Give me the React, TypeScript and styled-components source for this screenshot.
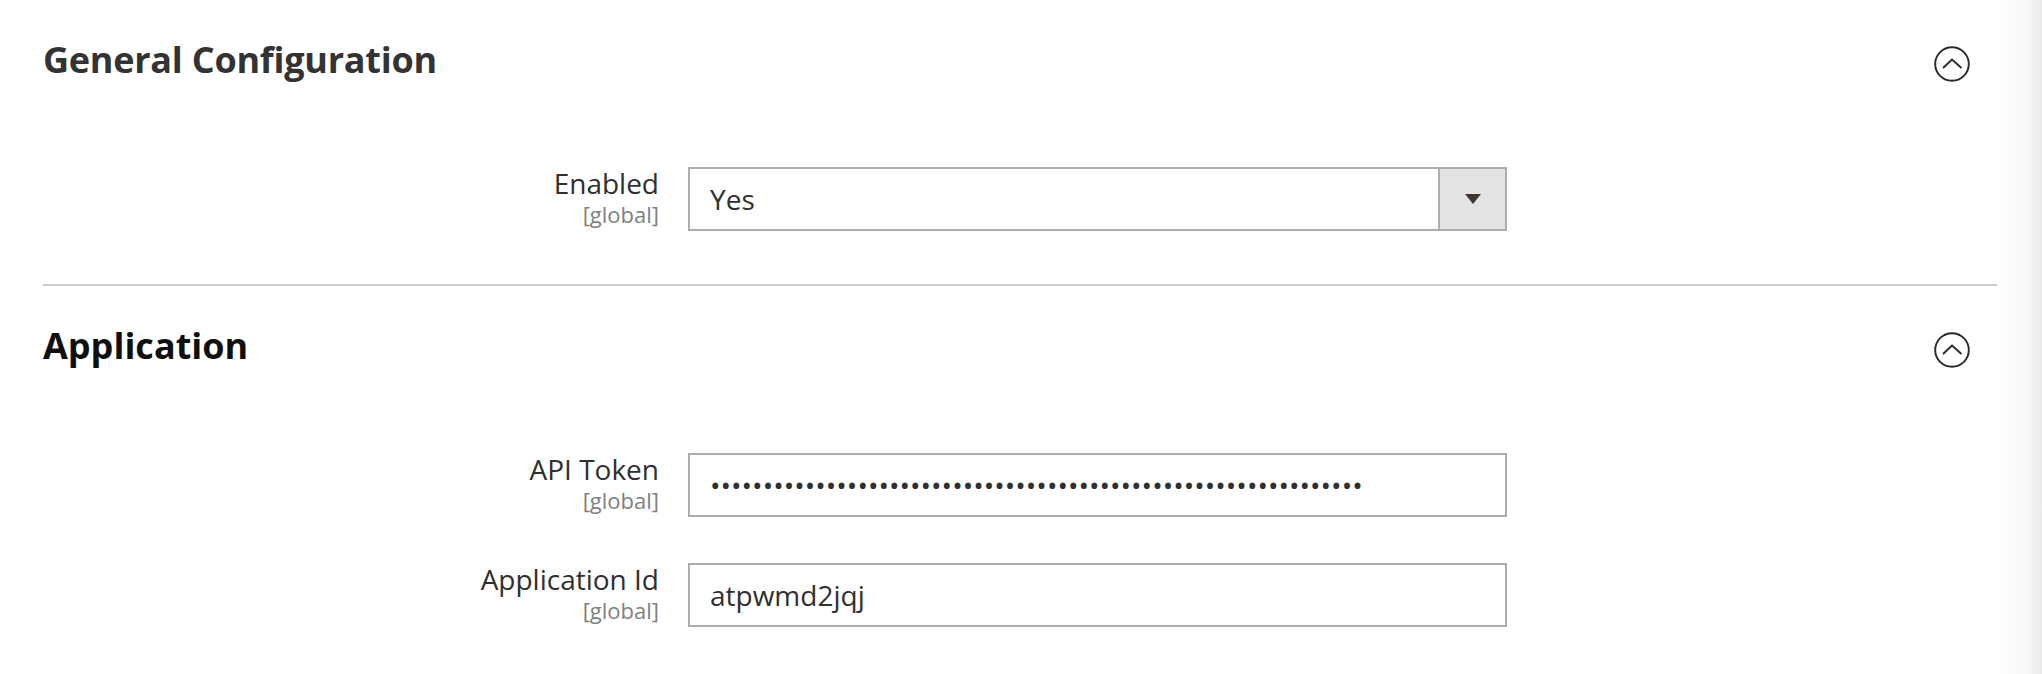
import React from 'react'
import styled, { createGlobalStyle } from 'styled-components'

const GlobalStyle = createGlobalStyle`
  html, body { margin: 0; padding: 0; background: #fff; }
  body { font-family: "Open Sans", "Liberation Sans", sans-serif; color: #303030; }
  * { box-sizing: border-box; }
`

const Page = styled.div`
  display: flex;
  min-height: 674px;
`

const Main = styled.div`
  flex: 1;
  padding-left: 43px;
`

const Shade = styled.div`
  width: 45px;
  background: linear-gradient(to right, #ffffff 0%, #f6f6f6 76%, #efefef 78%, #ebebeb 100%);
`

const Section = styled.section<{ $divider?: boolean }>`
  padding-top: 39px;
  padding-bottom: ${p => (p.$divider ? '53px' : '0')};
  border-bottom: ${p => (p.$divider ? '2px solid #cccccc' : 'none')};
`

const Header = styled.div`
  display: flex;
  justify-content: space-between;
  align-items: flex-start;
  padding-right: 27px;
  margin-bottom: 85px;
`

const Title = styled.h2<{ $strong?: boolean }>`
  margin: 0;
  font-size: 36px;
  line-height: 41px;
  font-weight: 700;
  letter-spacing: ${p => (p.$strong ? '0' : '-0.25px')};
  color: ${p => (p.$strong ? '#0f0f0f' : '#333333')};
`

const Toggle = styled.button`
  margin-top: 7px;
  width: 36px;
  height: 36px;
  padding: 0;
  border: 0;
  background: none;
  display: flex;
`

const Fields = styled.div`
  display: flex;
  flex-direction: column;
  gap: 46px;
`

const Row = styled.div`
  display: grid;
  grid-template-columns: 616px 819px;
  column-gap: 29px;
`

const Label = styled.label`
  text-align: right;
  font-size: 28px;
  line-height: 1.2;
  color: #303030;
`

const Scope = styled.span`
  display: block;
  font-size: 22px;
  line-height: 1.2;
  color: #808080;
`

const TextInput = styled.input`
  height: 64px;
  width: 100%;
  border: 2px solid #adadad;
  border-radius: 0;
  padding: 0 20px;
  font-family: "Open Sans", "Liberation Sans", sans-serif;
  font-size: 28px;
  color: #303030;
  background: #fff;
  outline: none;
`

const SelectBox = styled.div`
  height: 64px;
  display: flex;
  border: 2px solid #adadad;
  background: #fff;
`

const SelectValue = styled.div`
  flex: 1;
  display: flex;
  align-items: center;
  padding: 0 20px;
  font-size: 28px;
  color: #303030;
`

const ArrowBox = styled.div`
  width: 67px;
  border-left: 2px solid #adadad;
  background: #e3e3e3;
  display: flex;
  align-items: center;
  justify-content: center;
`

const Triangle = styled.span`
  width: 0;
  height: 0;
  border-left: 8px solid transparent;
  border-right: 8px solid transparent;
  border-top: 10px solid #41362f;
`

const ChevronCircle = () => (
  <svg width="36" height="36" viewBox="0 0 36 36">
    <circle cx="18" cy="18" r="16.8" fill="none" stroke="#2a2a2a" strokeWidth="1.9" />
    <path d="M9 22 L18 13.5 L27.5 22" fill="none" stroke="#2a2a2a" strokeWidth="1.9" strokeLinejoin="miter" />
  </svg>
)

const Field = ({ label, children }: { label: string; children: React.ReactNode }) => (
  <Row>
    <Label>
      {label}
      <Scope>[global]</Scope>
    </Label>
    {children}
  </Row>
)

const token = 'x'.repeat(62)

const App = (): JSX.Element => {
  return (
    <>
      <GlobalStyle />
      <Page>
        <Main>
          <Section $divider>
            <Header>
              <Title>General Configuration</Title>
              <Toggle aria-label="collapse"><ChevronCircle /></Toggle>
            </Header>
            <Fields>
              <Field label="Enabled">
                <SelectBox>
                  <SelectValue>Yes</SelectValue>
                  <ArrowBox><Triangle /></ArrowBox>
                </SelectBox>
              </Field>
            </Fields>
          </Section>
          <Section>
            <Header>
              <Title $strong>Application</Title>
              <Toggle aria-label="collapse"><ChevronCircle /></Toggle>
            </Header>
            <Fields>
              <Field label="API Token">
                <TextInput type="password" readOnly value={token} />
              </Field>
              <Field label="Application Id">
                <TextInput type="text" readOnly value="atpwmd2jqj" />
              </Field>
            </Fields>
          </Section>
        </Main>
        <Shade />
      </Page>
    </>
  )
}

export default App
